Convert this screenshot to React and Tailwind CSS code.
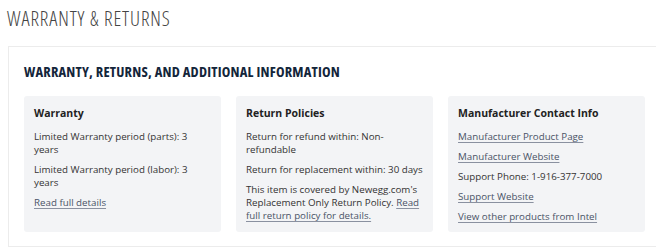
export default function App() {
  const linkCls = "text-[#4a5366] underline underline-offset-[1.5px] decoration-[#8a91a0]";
  const cardCls = "bg-[#f3f4f6] rounded-[3px] pl-[10px] pr-[9px] pt-[9px] pb-[9px] text-[9.75px] leading-[13px]";
  return (
    <div className="w-[656px] h-[250px] overflow-hidden bg-white font-['Open_Sans',sans-serif] text-[#333]">
      <div className="pl-[8px]">
        <h1 className="pt-[6px] h-[46px] text-[20px] leading-[26px] font-light font-stretch-condensed tracking-[0.9px] text-[#444] -ml-[1px]">
          WARRANTY &amp; RETURNS
        </h1>
        <div className="w-[653px] border border-[#ececec] border-r-0 px-[15px] pt-[15px] pb-[14px]">
          <h2 className="text-[14.5px] leading-[20px] font-bold font-stretch-condensed tracking-[0.2px] text-[#13253a] mb-[14px]">
            WARRANTY, RETURNS, AND ADDITIONAL INFORMATION
          </h2>
          <div className="grid grid-cols-[197px_197px_197px] gap-[15px]">
            <div className={cardCls}>
              <h3 className="text-[10.5px] leading-[16px] font-bold text-[#222] mb-[9px]">Warranty</h3>
              <p className="mb-[7px]">Limited Warranty period (parts): 3 years</p>
              <p className="mb-[7px]">Limited Warranty period (labor): 3 years</p>
              <p><a className={linkCls}>Read full details</a></p>
            </div>
            <div className={cardCls}>
              <h3 className="text-[10.5px] leading-[16px] font-bold text-[#222] mb-[9px]">Return Policies</h3>
              <p className="mb-[7px]">Return for refund within: Non-refundable</p>
              <p className="mb-[7px]">Return for replacement within: 30 days</p>
              <p>
                This item is covered by Newegg.com's Replacement Only Return Policy.{" "}
                <a className={linkCls}>Read full return policy for details.</a>
              </p>
            </div>
            <div className={cardCls}>
              <h3 className="text-[10.5px] leading-[16px] font-bold text-[#222] mb-[9px]">Manufacturer Contact Info</h3>
              <p className="mb-[7px]"><a className={linkCls}>Manufacturer Product Page</a></p>
              <p className="mb-[7px]"><a className={linkCls}>Manufacturer Website</a></p>
              <p className="mb-[7px]">Support Phone: 1-916-377-7000</p>
              <p className="mb-[7px]"><a className={linkCls}>Support Website</a></p>
              <p><a className={linkCls}>View other products from Intel</a></p>
            </div>
          </div>
        </div>
      </div>
    </div>
  );
}
